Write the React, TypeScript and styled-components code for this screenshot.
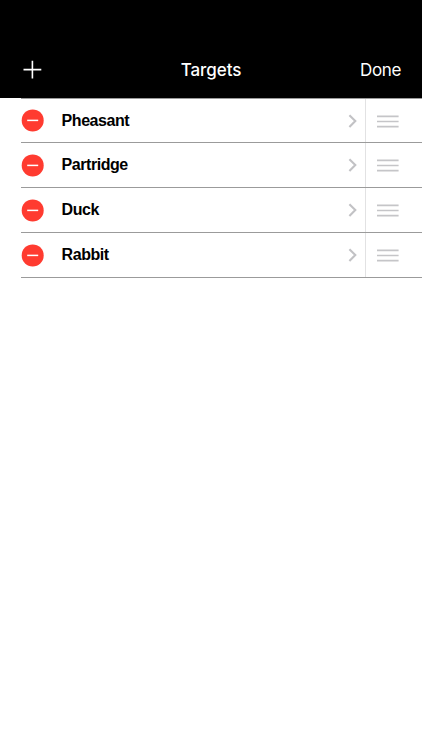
import React from "react";
import styled, { createGlobalStyle } from "styled-components";

const GlobalStyle = createGlobalStyle`
  * { box-sizing: border-box; }
  body { margin: 0; background: #fff; }
`;

const Screen = styled.main`
  width: 422px;
  height: 750px;
  background: #fff;
  overflow: hidden;
  font-family: Inter, "Liberation Sans", sans-serif;
`;

const NavBar = styled.header`
  height: 98px;
  padding: 42px 21px 0 23px;
  background: #000;
  color: #fff;
  display: grid;
  grid-template-columns: 1fr auto 1fr;
  align-items: center;
`;

const NavButton = styled.button<{ $end?: boolean }>`
  justify-self: ${(p) => (p.$end ? "end" : "start")};
  display: flex;
  padding: 0;
  border: 0;
  background: none;
  color: inherit;
  font: 400 17px/24px Inter, sans-serif;
  letter-spacing: -0.35px;
`;

const Title = styled.h1`
  margin: 0 2px 0 0;
  font-size: 17px;
  line-height: 24px;
  font-weight: 500;
  letter-spacing: -0.05px;
`;

const List = styled.ul`
  margin: 0;
  padding: 0 0 0 21px;
  list-style: none;
`;

const Row = styled.li`
  height: 45px;
  display: flex;
  align-items: center;
  border-bottom: 1px solid #9b9b9b;

  &:first-child {
    border-top: 1px solid #9b9b9b;
  }
`;

const IconButton = styled.button`
  display: flex;
  padding: 0;
  border: 0;
  background: none;
`;

const Label = styled.span`
  flex: 1;
  margin-left: 17.6px;
  font: 700 16px/20px "Liberation Sans", Arial, sans-serif;
  letter-spacing: -0.45px;
  color: #000;
`;

const Handle = styled.div`
  width: 57px;
  height: 100%;
  margin-left: 8px;
  padding: 1px 0 0 11px;
  border-left: 1px solid #e2e2e3;
  display: flex;
  align-items: center;
`;

const targets = ["Pheasant", "Partridge", "Duck", "Rabbit"];

export default function App() {
  return (
    <Screen>
      <GlobalStyle />
      <NavBar>
        <NavButton aria-label="Add">
          <svg width="19" height="20" viewBox="0 0 19 20" stroke="#fff" strokeWidth="1.6">
            <path d="M9.4 .7v17.8M.5 9.6h17.8" />
          </svg>
        </NavButton>
        <Title>Targets</Title>
        <NavButton $end>Done</NavButton>
      </NavBar>
      <List>
        {targets.map((name) => (
          <Row key={name}>
            <IconButton aria-label={`Delete ${name}`}>
              <svg width="23" height="23" viewBox="0 0 23 23">
                <circle cx="11.7" cy="11.4" r="11" fill="#ff3b30" />
                <path d="M6.2 11.4h11" stroke="#fff" strokeWidth="1.5" />
              </svg>
            </IconButton>
            <Label>{name}</Label>
            <svg width="9" height="14" viewBox="0 0 9 14" fill="none" stroke="#c2c2c5" strokeWidth="2.1">
              <path d="M1.4 1.2l5.9 5.9-5.9 5.9" />
            </svg>
            <Handle>
              <svg width="22" height="13" viewBox="0 0 22 13" stroke="#c5c5c8" strokeWidth="1.6">
                <path d="M0 1.4h21.6M0 6.5h21.6M0 11.6h21.6" />
              </svg>
            </Handle>
          </Row>
        ))}
      </List>
    </Screen>
  );
}
